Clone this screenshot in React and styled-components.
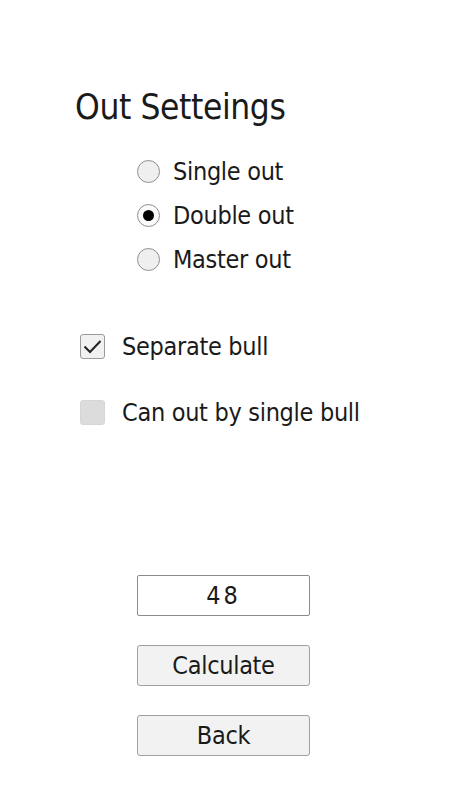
import React, { useState } from 'react';
import styled, { createGlobalStyle } from 'styled-components';

const GlobalStyle = createGlobalStyle`
  html, body {
    margin: 0;
    padding: 0;
    background: #ffffff;
  }
  body {
    font-family: "DejaVu Sans Condensed", "DejaVu Sans", sans-serif;
    font-stretch: condensed;
    color: #1a1a1a;
  }
`;

const Page = styled.div`
  width: 450px;
  height: 800px;
  display: flex;
  flex-direction: column;
  padding: 85px 0 0 75px;
  box-sizing: border-box;
`;

const Title = styled.h1`
  margin: 0;
  font-size: 35px;
  font-weight: 400;
  line-height: 44px;
  letter-spacing: -0.4px;
`;

const RadioGroup = styled.div`
  display: flex;
  flex-direction: column;
  margin: 20px 0 0 62px;
`;

const Row = styled.label`
  display: flex;
  align-items: center;
  height: 44px;
  font-size: 25px;
  letter-spacing: -0.3px;
  gap: ${(p) => p.gap || 13}px;
  cursor: pointer;
`;

const RadioCircle = styled.span`
  width: 23px;
  height: 23px;
  box-sizing: border-box;
  border-radius: 50%;
  border: 1px solid #8f8f8f;
  background: ${(p) => (p.checked ? '#fafafa' : '#efefef')};
  display: flex;
  align-items: center;
  justify-content: center;
  &::after {
    content: "";
    display: ${(p) => (p.checked ? 'block' : 'none')};
    width: 11px;
    height: 11px;
    border-radius: 50%;
    background: #000;
  }
`;

const CheckGroup = styled.div`
  display: flex;
  flex-direction: column;
  gap: 22px;
  margin: 43px 0 0 5px;
`;

const Box = styled.span`
  width: 25px;
  height: 25px;
  box-sizing: border-box;
  border-radius: 3px;
  border: 1px solid ${(p) => (p.checked ? '#9a9a9a' : '#d6d6d6')};
  background: ${(p) => (p.checked ? '#f1f1f1' : '#dcdcdc')};
  display: flex;
  align-items: center;
  justify-content: center;
`;

const Controls = styled.div`
  display: flex;
  flex-direction: column;
  gap: 29px;
  margin: 141px 0 0 62px;
  width: 173px;
`;

const ValueBox = styled.div`
  height: 41px;
  box-sizing: border-box;
  border: 1px solid #8c8c8c;
  border-radius: 2px;
  background: #fff;
  display: flex;
  align-items: center;
  justify-content: center;
  font-size: 25px;
  letter-spacing: 3px;
`;

const Button = styled.button`
  height: 41px;
  box-sizing: border-box;
  border: 1px solid #a0a0a0;
  border-radius: 3px;
  background: #f2f2f2;
  font-family: inherit;
  font-stretch: condensed;
  color: #1a1a1a;
  font-size: 25px;
  letter-spacing: -0.3px;
  padding: 0;
`;

function Check() {
  return (
    <svg width="21" height="21" viewBox="0 0 21 21">
      <path d="M2.5 10.5 L8 16 L18.5 5" fill="none" stroke="#222" strokeWidth="2" />
    </svg>
  );
}

export default function App() {
  const [mode, setMode] = useState('double');
  const [separate, setSeparate] = useState(true);
  const [singleBull, setSingleBull] = useState(false);
  const modes = [
    ['single', 'Single out'],
    ['double', 'Double out'],
    ['master', 'Master out'],
  ];

  return (
    <Page>
      <GlobalStyle />
      <Title>Out Setteings</Title>
      <RadioGroup>
        {modes.map(([key, label]) => (
          <Row key={key} onClick={() => setMode(key)}>
            <RadioCircle checked={mode === key} />
            {label}
          </Row>
        ))}
      </RadioGroup>
      <CheckGroup>
        <Row gap={17} onClick={() => setSeparate(!separate)}>
          <Box checked={separate}>{separate && <Check />}</Box>
          Separate bull
        </Row>
        <Row gap={17} onClick={() => setSingleBull(!singleBull)}>
          <Box checked={singleBull}>{singleBull && <Check />}</Box>
          Can out by single bull
        </Row>
      </CheckGroup>
      <Controls>
        <ValueBox>48</ValueBox>
        <Button>Calculate</Button>
        <Button>Back</Button>
      </Controls>
    </Page>
  );
}
